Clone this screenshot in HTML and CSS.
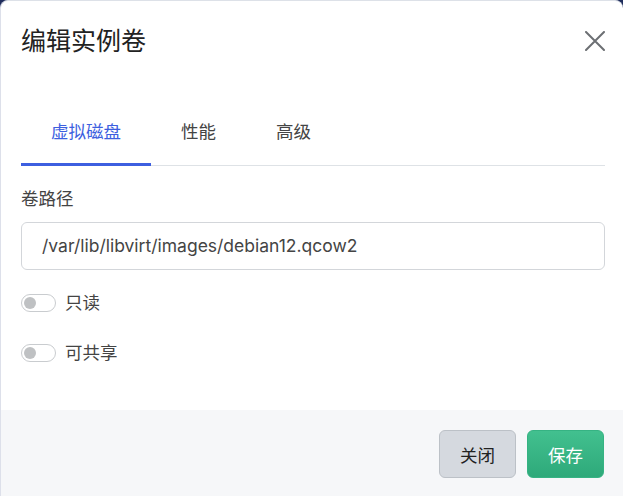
FILE: index.html
```html
<!DOCTYPE html>
<html lang="zh">
<head>
<meta charset="utf-8">
<link rel="stylesheet" href="styles.css">
</head>
<body>
<div class="modal">
  <div class="modal-header">
    <h1 class="modal-title">编辑实例卷</h1>
    <button class="close-btn" aria-label="关闭">
      <svg width="20" height="20" viewBox="0 0 20 20"><path d="M1 1L19 19M19 1L1 19" stroke="#6c6f73" stroke-width="2" stroke-linecap="round" fill="none"/></svg>
    </button>
  </div>
  <div class="modal-body">
    <div class="tabs">
      <div class="tab active">虚拟磁盘</div>
      <div class="tab">性能</div>
      <div class="tab">高级</div>
    </div>
    <div class="field">
      <label class="field-label">卷路径</label>
      <div class="input">/var/lib/libvirt/images/debian12.qcow2</div>
    </div>
    <div class="switch-row">
      <span class="switch"><span class="knob"></span></span>
      <span class="switch-label">只读</span>
    </div>
    <div class="switch-row">
      <span class="switch"><span class="knob"></span></span>
      <span class="switch-label">可共享</span>
    </div>
  </div>
  <div class="modal-footer">
    <button class="btn btn-secondary">关闭</button>
    <button class="btn btn-primary">保存</button>
  </div>
</div>
</body>
</html>
```
FILE: styles.css
```css
* { box-sizing: border-box; }
html, body { margin: 0; height: 100%; }
body {
  background: #1f2d5c;
  font-family: Inter, "Noto Sans CJK SC", sans-serif;
  color: #333;
}
.modal {
  height: 496px;
  width: 623px;
  background: #fff;
  border-radius: 8px 8px 0 0;
  border-top: 1px solid #dde1e8;
  border-left: 1px solid #dde0ea;
  display: flex;
  flex-direction: column;
  overflow: hidden;
}
.modal-header {
  display: flex;
  justify-content: space-between;
  padding: 22px 18px 0 20px;
  height: 78px;
  align-items: flex-start;
}
.modal-title {
  margin: 0;
  font-size: 25px;
  font-weight: 400;
  color: #222;
  line-height: 36px;
}
.close-btn {
  background: none;
  border: 0;
  padding: 0;
  margin-top: 8px;
  width: 20px;
  height: 20px;
}
.modal-body {
  padding: 33px 18px 0 20px;
  flex: 1;
}
.tabs {
  display: flex;
  border-bottom: 1px solid #dee2e6;
}
.tab {
  padding: 8px 30px 19px;
  font-size: 17.5px;
  line-height: 24px;
  color: #444;
  border-bottom: 3px solid transparent;
  margin-bottom: -1px;
}
.tab.active {
  color: #3d5fe0;
  border-bottom-color: #3d5fe0;
}
.field { margin-top: 20px; }
.field-label {
  display: block;
  font-size: 17.5px;
  line-height: 26px;
  color: #444;
  margin-bottom: 10px;
}
.input {
  height: 48px;
  border: 1px solid #d3d6da;
  border-radius: 6px;
  padding: 0 20px;
  font-size: 17.5px;
  line-height: 46px;
  color: #444;
}
.switch-row {
  display: flex;
  align-items: center;
  gap: 9px;
  margin-top: 20px;
  height: 26px;
}
.switch-row + .switch-row { margin-top: 24px; }
.switch {
  width: 35px;
  height: 18px;
  border: 1px solid #c9cccf;
  border-radius: 9px;
  position: relative;
  background: #fff;
}
.knob {
  position: absolute;
  left: 2px;
  top: 2px;
  width: 12px;
  height: 12px;
  border-radius: 50%;
  background: #bfc1c3;
}
.switch-label { font-size: 17.5px; color: #444; line-height: 26px; }
.modal-footer {
  background: #f6f7f9;
  height: 86px;
  display: flex;
  justify-content: flex-end;
  align-items: flex-start;
  padding: 20px 19px 0;
  gap: 11px;
}
.btn {
  width: 77px;
  height: 48px;
  border-radius: 6px;
  font-family: inherit;
  font-size: 17.5px;
}
.btn-secondary {
  background: #d5d9df;
  border: 1px solid #bcc1c7;
  color: #222;
}
.btn-primary {
  background: linear-gradient(#42c08f, #2ea97a);
  border: 1px solid #36b383;
  color: #fff;
}
```
